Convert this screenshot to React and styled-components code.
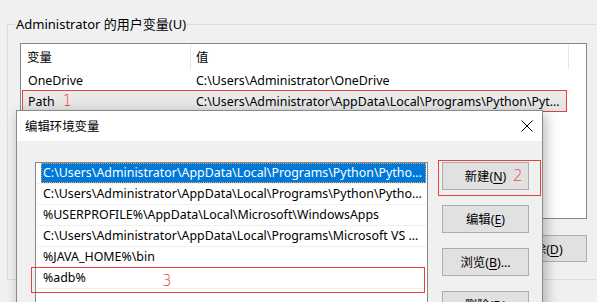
import styled, { createGlobalStyle } from "styled-components";

const GlobalStyle = createGlobalStyle`
  body {
    margin: 0;
    background: #f0f0f0;
    font-family: "Noto Sans", "Noto Sans CJK SC", sans-serif;
    font-size: 12.4px;
    color: #000;
  }
`;

const Window = styled.div`
  position: relative;
  width: 597px;
  height: 302px;
  overflow: hidden;
  padding-top: 15px;
  box-sizing: border-box;
`;

const GroupBox = styled.fieldset`
  margin: 0 0 0 7px;
  width: 640px;
  border: 1px solid #dcdcdc;
  padding: 10px 0 17px 12px;
  box-sizing: border-box;
`;

const Legend = styled.legend`
  margin-left: -5px;
  padding: 0 1px;
  line-height: 18px;
  font-size: 13px;
`;

const ListView = styled.div`
  width: 567px;
  height: 176px;
  box-sizing: border-box;
  border: 1px solid #828790;
  background: #fff;
`;

const HeaderRow = styled.div`
  display: flex;
  height: 25px;
`;

const HeaderCell = styled.div`
  width: ${(p) => p.$w}px;
  display: flex;
  align-items: center;
  padding-left: ${(p) => p.$pad}px;
  box-sizing: border-box;
  border-right: 1px solid #e5e5e5;
  margin: 1px 0 0;
`;

const Row = styled.div`
  display: flex;
  align-items: center;
  width: 543px;
  height: 20px;
  margin: ${(p) => (p.$first ? "1px" : "0")} 0 1px 2px;
  box-sizing: border-box;
  background: ${(p) => (p.$selected ? "linear-gradient(#ececec, #e3e3e3)" : "transparent")};
  outline: ${(p) => (p.$marked ? "1px solid #e8403c" : "none")};
`;

const Cell = styled.div`
  width: ${(p) => p.$w}px;
  padding-left: ${(p) => p.$pad}px;
  box-sizing: border-box;
  white-space: nowrap;
  overflow: hidden;
  text-overflow: ellipsis;
`;

const Mark = styled.span`
  color: #e8403c;
  font-family: "DejaVu Sans", sans-serif;
  font-weight: 300;
  font-size: 15px;
  margin-left: ${(p) => p.$gap || 0}px;
`;

const ButtonRow = styled.div`
  display: flex;
  justify-content: flex-end;
  gap: 10px;
  width: 567px;
  margin-top: 16px;
`;

const Button = styled.button`
  position: relative;
  width: ${(p) => p.$w || 87}px;
  height: ${(p) => p.$h || 28}px;
  background: #e1e1e1;
  border: 1px solid #adadad;
  font: inherit;
  color: #000;
  padding: 0;
  flex-shrink: 0;
`;

const Key = styled.u`
  text-underline-offset: 2px;
`;

const Dialog = styled.div`
  position: absolute;
  left: 16px;
  top: 110px;
  width: 527px;
  height: 230px;
  box-sizing: border-box;
  border: 1px solid #8a8a8a;
  background: #f0f0f0;
  box-shadow: 3px 4px 12px rgba(0, 0, 0, 0.28);
`;

const TitleBar = styled.div`
  display: flex;
  align-items: center;
  justify-content: space-between;
  height: 30px;
  background: #fff;
  padding: 0 9px 0 8px;
`;

const Body = styled.div`
  display: flex;
  gap: 14px;
  padding: 21px 0 0 18px;
`;

const EditList = styled.div`
  width: 393px;
  height: 160px;
  box-sizing: border-box;
  border: 1px solid #828790;
  border-bottom: none;
  background: #fff;
  padding-right: 1px;
`;

const EditRow = styled.div`
  position: relative;
  border-bottom: 1px solid #efefef;
  padding-left: 5px;
`;

const EditText = styled.div`
  height: 20px;
  line-height: 20px;
  padding-left: 2px;
  white-space: nowrap;
  overflow: hidden;
  text-overflow: ellipsis;
  background: ${(p) => (p.$selected ? "#0078d7" : "transparent")};
  color: ${(p) => (p.$selected ? "#fff" : "#000")};
  outline: ${(p) => (p.$selected ? "1px dotted #f5a04a" : "none")};
  outline-offset: -1px;
`;

const ButtonColumn = styled.div`
  display: flex;
  flex-direction: column;
  gap: 15px;
`;

const Callout = styled.div`
  position: absolute;
  left: ${(p) => p.$l}px;
  top: ${(p) => p.$t}px;
  width: ${(p) => p.$w}px;
  height: ${(p) => p.$h}px;
  border: 1px solid #e8403c;
  box-sizing: border-box;
  pointer-events: none;
`;

const CalloutMark = styled(Mark)`
  position: absolute;
  left: ${(p) => p.$x}px;
  top: ${(p) => p.$y}px;
  line-height: 16px;
`;

const CloseIcon = () => (
  <svg width="12" height="12" viewBox="0 0 12 12">
    <path d="M0.5 0.5L11.5 11.5M11.5 0.5L0.5 11.5" stroke="#000" strokeWidth="1" />
  </svg>
);

const pathItems = [
  "C:\\Users\\Administrator\\AppData\\Local\\Programs\\Python\\Python37\\Scripts\\",
  "C:\\Users\\Administrator\\AppData\\Local\\Programs\\Python\\Python37\\",
  "%USERPROFILE%\\AppData\\Local\\Microsoft\\WindowsApps",
  "C:\\Users\\Administrator\\AppData\\Local\\Programs\\Microsoft VS Code\\bin",
  "%JAVA_HOME%\\bin",
  "%adb%",
];

export default function App() {
  return (
    <>
      <GlobalStyle />
      <Window>
        <GroupBox>
          <Legend>Administrator 的用户变量(U)</Legend>
          <ListView>
            <HeaderRow>
              <HeaderCell $w={170} $pad={6}>变量</HeaderCell>
              <HeaderCell $w={378} $pad={5}>值</HeaderCell>
            </HeaderRow>
            <Row $first>
              <Cell $w={169} $pad={5}>OneDrive</Cell>
              <Cell $w={374} $pad={4}>C:\Users\Administrator\OneDrive</Cell>
            </Row>
            <Row $selected $marked>
              <Cell $w={169} $pad={5}>
                Path<Mark $gap={8}>1</Mark>
              </Cell>
              <Cell $w={374} $pad={4}>
                C:\Users\Administrator\AppData\Local\Programs\Python\Python37\Scripts\;C:\Users
              </Cell>
            </Row>
          </ListView>
          <ButtonRow>
            <Button $w={90} $h={27}>新建(<Key>W</Key>)...</Button>
            <Button $w={90} $h={27}>编辑(<Key>I</Key>)...</Button>
            <Button $w={90} $h={27}>删除(<Key>D</Key>)</Button>
          </ButtonRow>
        </GroupBox>

        <Dialog>
          <TitleBar>
            <span>编辑环境变量</span>
            <CloseIcon />
          </TitleBar>
          <Body>
            <EditList>
              {pathItems.map((item, i) => (
                <EditRow key={item}>
                  <EditText $selected={i === 0}>{item}</EditText>
                  {i === pathItems.length - 1 && (
                    <>
                      <Callout $l={-5} $t={-1} $w={394} $h={26} />
                      <CalloutMark $x={126} $y={5}>3</CalloutMark>
                    </>
                  )}
                </EditRow>
              ))}
            </EditList>
            <ButtonColumn>
              <Button>
                新建(<Key>N</Key>)
                <Callout $l={-5} $t={-3} $w={103} $h={36} />
                <CalloutMark $x={70} $y={5}>2</CalloutMark>
              </Button>
              <Button>编辑(<Key>E</Key>)</Button>
              <Button>浏览(<Key>B</Key>)...</Button>
              <Button>删除(<Key>D</Key>)</Button>
            </ButtonColumn>
          </Body>
        </Dialog>
      </Window>
    </>
  );
}
